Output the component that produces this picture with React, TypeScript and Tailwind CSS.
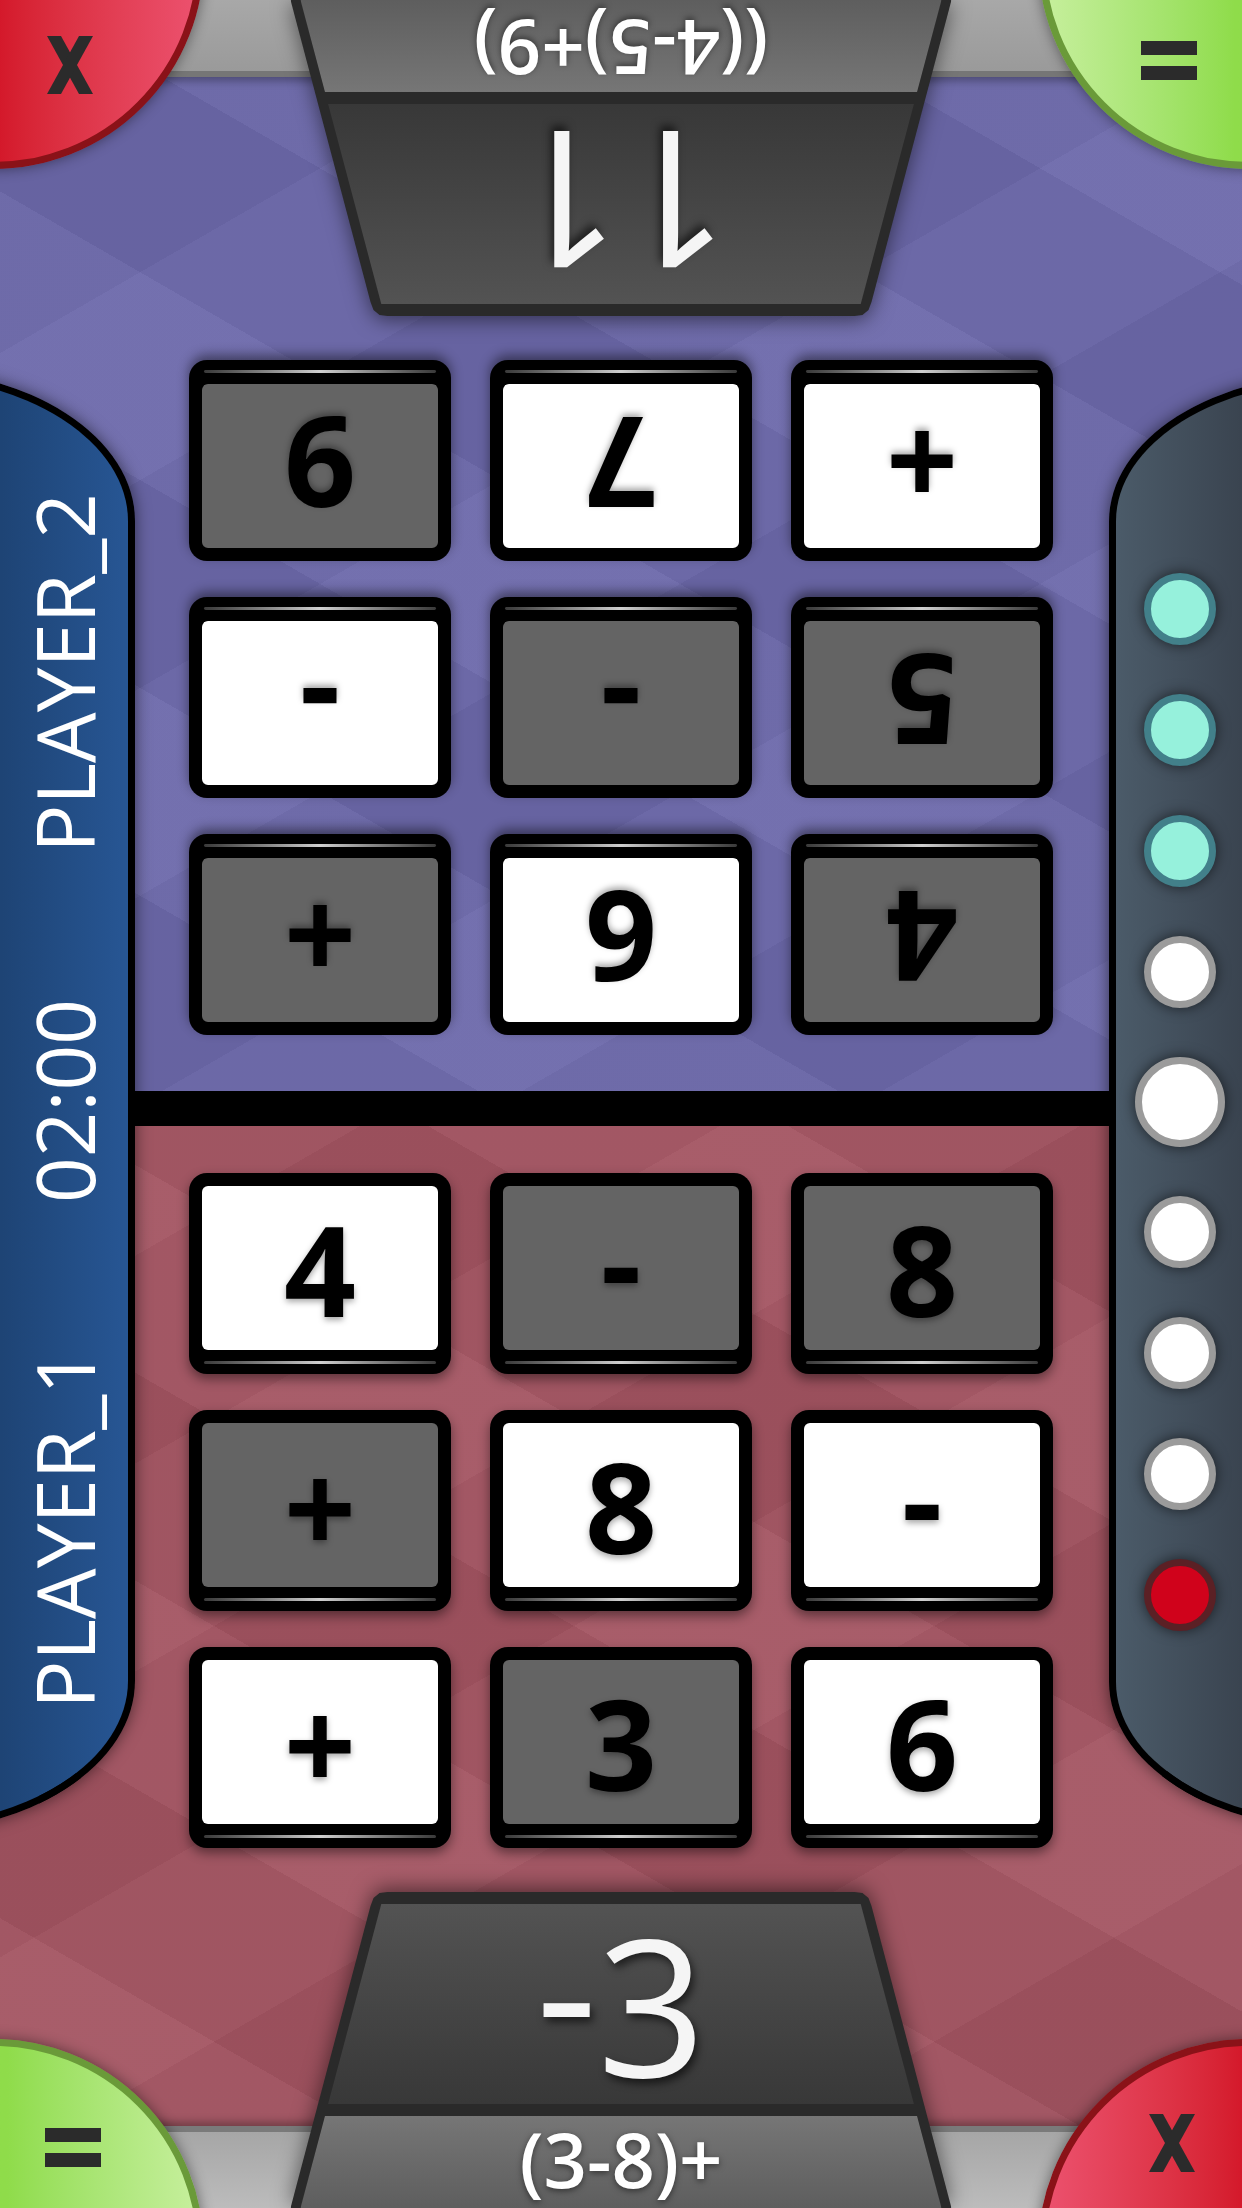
import React from 'react';

type Tile = { v: string; used: boolean };

const p1Tiles: Tile[] = [
  { v: '4', used: false },
  { v: '-', used: true },
  { v: '8', used: true },
  { v: '+', used: true },
  { v: '8', used: false },
  { v: '-', used: false },
  { v: '+', used: false },
  { v: '3', used: true },
  { v: '6', used: false },
];

const p2Tiles: Tile[] = [
  { v: '4', used: true },
  { v: '6', used: false },
  { v: '+', used: true },
  { v: '5', used: true },
  { v: '-', used: true },
  { v: '-', used: false },
  { v: '+', used: false },
  { v: '7', used: false },
  { v: '9', used: true },
];

function TileView({ t }: { t: Tile }) {
  return (
    <div className="flex h-[201px] w-[262px] flex-col rounded-[18px] bg-black px-[13px] pt-[13px] shadow-[0_5px_12px_rgba(0,0,0,0.45)]">
      <div
        className={`flex flex-1 items-center justify-center rounded-[6px] ${
          t.used ? 'bg-[#646464]' : 'bg-white'
        }`}
      >
        <span
          className={`text-[126px] font-bold leading-none text-black [text-shadow:0_3px_6px_rgba(0,0,0,0.35)] ${
            t.v === '-' ? '-translate-y-[8px]' : ''
          }`}
        >
          {t.v}
        </span>
      </div>
      <div className="flex h-[24px] items-center px-[2px]">
        <div className="h-[3px] w-full rounded-full bg-linear-to-r from-[#3a3a3a] via-[#cfcfcf] to-[#3a3a3a]" />
      </div>
    </div>
  );
}

function Panel({ num, expr }: { num: React.ReactNode; expr: string }) {
  return (
    <div className="absolute bottom-0 left-1/2 -translate-x-1/2 drop-shadow-[0_-4px_10px_rgba(0,0,0,0.5)]">
      <div className="flex h-[316px] w-[661px] flex-col bg-[#2a2a2a] pt-[12px] [clip-path:polygon(0_100%,80px_14px,83px_6px,89px_1px,97px_0,564px_0,572px_1px,578px_6px,581px_14px,661px_100%)]">
        <div className="flex h-[200px] items-center justify-center bg-linear-to-b from-[#535353] to-[#383838] [clip-path:polygon(90.8px_0,570.2px_0,623.4px_100%,37.6px_100%)]">
          <span className="text-[190px] font-medium leading-none text-[#f5f5f5] [text-shadow:3px_5px_8px_rgba(0,0,0,0.6)]">
            {num}
          </span>
        </div>
        <div className="mt-[12px] flex flex-1 items-center justify-center bg-linear-to-b from-[#767676] to-[#5e5e5e] [clip-path:polygon(34.5px_0,626.5px_0,651px_100%,10px_100%)]">
          <span className="-translate-y-[3px] text-[76px] font-semibold leading-none text-white [text-shadow:0_2px_6px_rgba(0,0,0,0.5)]">
            {expr}
          </span>
        </div>
      </div>
    </div>
  );
}

function XIcon() {
  return (
    <svg width="46" height="58" viewBox="0 0 46 58">
      <polygon points="0,0 14,0 46,58 32,58" fill="#2b2b2b" />
      <polygon points="32,0 46,0 14,58 0,58" fill="#2b2b2b" />
    </svg>
  );
}

function Half({
  tiles,
  num,
  expr,
  outerClass,
  dividerClass,
  regionClass,
  stripClass,
}: {
  tiles: Tile[];
  num: React.ReactNode;
  expr: string;
  outerClass: string;
  dividerClass: string;
  regionClass: string;
  stripClass: string;
}) {
  return (
    <div className={outerClass}>
      <div className={dividerClass} />
      <div className={regionClass}>
        <div className="grid grid-cols-3 content-start gap-x-[39px] gap-y-[36px] self-start">
          {tiles.map((t, i) => (
            <TileView key={i} t={t} />
          ))}
        </div>
      </div>
      <div className={stripClass} />

      {/* equals button (bottom-left) */}
      <div className="absolute -bottom-[253px] -left-[232px] h-[422px] w-[436px] rounded-full border-[7px] border-[#6a9a39] bg-linear-to-r from-[#8fdc4a] from-55% to-[#c6ef9c] shadow-[0_0_14px_rgba(0,0,0,0.45)]" />
      <div className="absolute bottom-[41px] left-[45px] flex flex-col gap-[11px]">
        <div className="h-[14px] w-[56px] bg-[#2b2b2b]" />
        <div className="h-[14px] w-[56px] bg-[#2b2b2b]" />
      </div>

      {/* close button (bottom-right) */}
      <div className="absolute -bottom-[253px] -right-[232px] h-[422px] w-[436px] rounded-full border-[7px] border-[#8a1218] bg-linear-to-r from-[#ec516e] to-[#d4182a] to-47% shadow-[0_0_14px_rgba(0,0,0,0.45)]" />
      <div className="absolute bottom-[36px] right-[47px]">
        <XIcon />
      </div>

      <Panel num={num} expr={expr} />
    </div>
  );
}

type Dot = 'teal' | 'white' | 'big' | 'red';
const dots: Dot[] = ['teal', 'teal', 'teal', 'white', 'big', 'white', 'white', 'white', 'red'];

function DotView({ d }: { d: Dot }) {
  if (d === 'teal')
    return <div className="size-[72px] rounded-full border-[7px] border-[#42808a] bg-[#96f1dc] shadow-[0_0_14px_rgba(0,0,0,0.6)]" />;
  if (d === 'red')
    return <div className="size-[72px] rounded-full border-[7px] border-[#5b2025] bg-[#d0021b] shadow-[0_0_14px_rgba(0,0,0,0.6)]" />;
  if (d === 'big')
    return <div className="size-[90px] rounded-full border-[7px] border-[#9b9b9b] bg-white shadow-[0_0_14px_rgba(0,0,0,0.6)]" />;
  return <div className="size-[72px] rounded-full border-[7px] border-[#9b9b9b] bg-white shadow-[0_0_14px_rgba(0,0,0,0.6)]" />;
}

export default function App() {
  return (
    <div className="relative flex h-[2208px] w-[1242px] flex-col overflow-hidden bg-black font-['Open_Sans',sans-serif]">
      <Half
        tiles={p2Tiles}
        num="11"
        expr="((4-5)+9)"
        outerClass="relative flex h-[1108px] shrink-0 rotate-180 flex-col"
        dividerClass="h-[17px] shrink-0 bg-black"
        regionClass="flex flex-1 items-start justify-center bg-[#6c68aa] pt-[56px] [background-image:repeating-linear-gradient(30deg,rgba(255,255,255,0.03)_0_180px,rgba(0,0,0,0.03)_180px_360px),repeating-linear-gradient(150deg,rgba(255,255,255,0.025)_0_180px,rgba(0,0,0,0.025)_180px_360px)]"
        stripClass="relative h-[77px] shrink-0 border-t-[6px] border-[#767676] bg-linear-to-b from-[#9a9a9a] to-[#a8a8a8] shadow-[0_-4px_8px_rgba(0,0,0,0.3)]"
      />
      <Half
        tiles={p1Tiles}
        num={
          <>
            <span className="relative -top-[16px]">-</span>3
          </>
        }
        expr="(3-8)+"
        outerClass="relative flex h-[1100px] shrink-0 flex-col"
        dividerClass="h-[18px] shrink-0 bg-black"
        regionClass="flex flex-1 items-start justify-center bg-[#a35461] pt-[47px] [background-image:repeating-linear-gradient(30deg,rgba(255,255,255,0.03)_0_180px,rgba(0,0,0,0.03)_180px_360px),repeating-linear-gradient(150deg,rgba(255,255,255,0.025)_0_180px,rgba(0,0,0,0.025)_180px_360px)]"
        stripClass="relative h-[82px] shrink-0 border-t-[6px] border-[#7a7a7a] bg-linear-to-b from-[#a6a6a6] to-[#bcbcbc] shadow-[0_-4px_8px_rgba(0,0,0,0.3)]"
      />

      {/* left player panel */}
      <div className="absolute -left-[100px] top-[369px] flex h-[1464px] w-[235px] flex-col items-center justify-between rounded-tr-[235px_152px] rounded-br-[235px_152px] border-[7px] border-black bg-linear-to-r from-[#1e4475] from-43% to-[#275694] py-[117px] pl-[93px] text-white shadow-[0_0_16px_rgba(0,0,0,0.55)]">
        <span className="rotate-180 text-[80px] leading-none [writing-mode:vertical-rl]">PLAYER_2</span>
        <span className="rotate-180 text-[80px] leading-none [writing-mode:vertical-rl]">02:00</span>
        <span className="rotate-180 text-[80px] leading-none [writing-mode:vertical-rl]">PLAYER_1</span>
      </div>

      {/* right score panel */}
      <div className="absolute -right-[100px] top-[373px] flex h-[1457px] w-[233px] flex-col items-center justify-center gap-[49px] rounded-tl-[233px_148px] rounded-bl-[233px_148px] border-[7px] border-black bg-linear-to-r from-[#4b5b69] to-[#3a4450] to-57% pr-[92px] shadow-[0_0_16px_rgba(0,0,0,0.55)]">
        {dots.map((d, i) => (
          <DotView key={i} d={d} />
        ))}
      </div>
    </div>
  );
}
